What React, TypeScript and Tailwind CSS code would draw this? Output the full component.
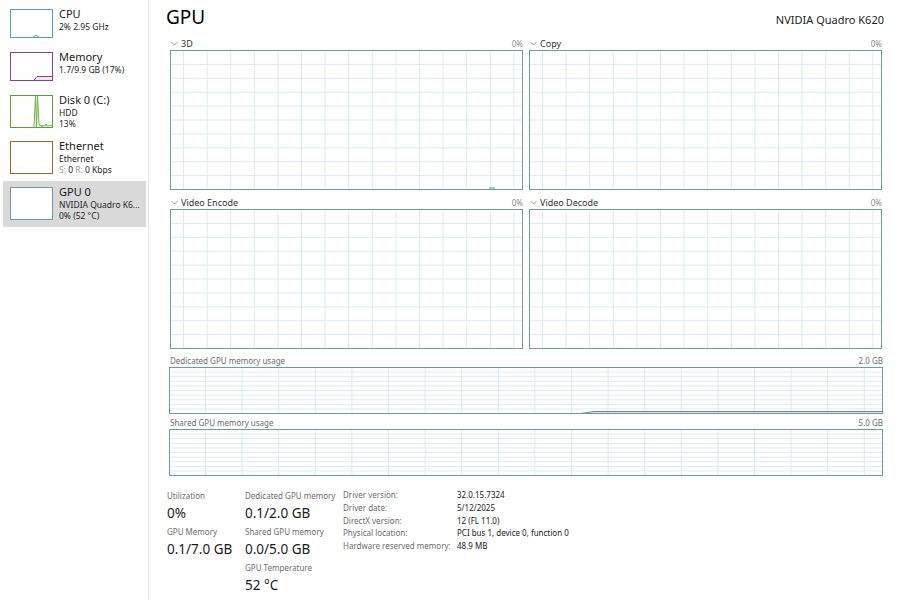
import React, { useId } from 'react';

const FONT = { fontFamily: '"Noto Sans", "Open Sans", Arial, sans-serif' };

const Chevron: React.FC = () => (
  <svg width="7" height="5" viewBox="0 0 7 5" className="mr-[3px]">
    <path d="M0.5 1 L3.5 4 L6.5 1" fill="none" stroke="#8a8a8a" strokeWidth="0.9" />
  </svg>
);

type GridProps = {
  cellW: number;
  cellH: number;
  offX: number;
  children?: React.ReactNode;
};

// scrolling usage chart: light grid behind, series drawn on top
const GridChart: React.FC<GridProps> = ({ cellW, cellH, offX, children }) => {
  const id = useId().replace(/:/g, '');
  return (
    <svg className="absolute inset-0 w-full h-full">
      <defs>
        <pattern id={`v${id}`} x={offX} y="0" width={cellW} height="10" patternUnits="userSpaceOnUse">
          <line x1="0.5" y1="0" x2="0.5" y2="10" stroke="#dde9ec" strokeWidth="1" />
        </pattern>
        <pattern id={`h${id}`} x="0" y="0" width="10" height={cellH} patternUnits="userSpaceOnUse">
          <line x1="0" y1={cellH - 0.5} x2="10" y2={cellH - 0.5} stroke="#dde9ec" strokeWidth="1" />
        </pattern>
      </defs>
      <rect width="100%" height="100%" fill={`url(#h${id})`} />
      <rect width="100%" height="100%" fill={`url(#v${id})`} />
      {children}
    </svg>
  );
};

const EngineGraph: React.FC<{ name: string; blip?: boolean }> = ({ name, blip }) => (
  <div className="flex flex-col">
    <div className="flex items-center justify-between h-[13px] text-[9px] leading-[13px]">
      <div className="flex items-center text-[#333] pl-[1px]">
        <Chevron />
        <span>{name}</span>
      </div>
      <span className="text-[#8a8a8a] text-[8px]">0%</span>
    </div>
    <div className="relative h-[140px] border border-[#6e9aa2] bg-white">
      <GridChart cellW={23.6} cellH={13.9} offX={12}>
        {blip && <line x1="318" y1="137" x2="324" y2="137" stroke="#5d8f99" strokeWidth="1" />}
      </GridChart>
    </div>
  </div>
);

const MemoryGraph: React.FC<{ name: string; max: string; line?: boolean }> = ({ name, max, line }) => (
  <div className="flex flex-col">
    <div className="flex items-center justify-between h-[13px] text-[8px] leading-[13px] text-[#6d6d6d]">
      <span className="pl-[1px]">{name}</span>
      <span>{max}</span>
    </div>
    <div className="relative h-[47px] border border-[#6e9aa2] bg-white">
      <GridChart cellW={36.6} cellH={4.6} offX={35}>
        {line && (
          <>
            <polygon points="411,46 424,43.5 714,43.5 714,46" fill="#d4e6ea" />
            <polyline points="411,45.5 424,43.5 714,43.5" fill="none" stroke="#5d8f99" strokeWidth="1" />
          </>
        )}
      </GridChart>
    </div>
  </div>
);

type SideItem = {
  title: string;
  lines: React.ReactNode[];
  border: string;
  h: string;
  thumbH: string;
  selected?: boolean;
  thumb?: React.ReactNode;
};

const sideItems: SideItem[] = [
  {
    title: 'CPU',
    lines: ['2%  2.95 GHz'],
    border: 'border-[#5a9dbf]',
    h: 'h-[43px]',
    thumbH: 'h-[29px]',
    thumb: (
      <svg className="absolute inset-0 w-full h-full">
        <polyline points="22,26.5 25,25.5 28,26.5" fill="none" stroke="#5a9dbf" strokeWidth="1" />
      </svg>
    ),
  },
  {
    title: 'Memory',
    lines: ['1.7/9.9 GB (17%)'],
    border: 'border-[#8b3d8b]',
    h: 'h-[43px]',
    thumbH: 'h-[29px]',
    thumb: (
      <svg className="absolute inset-0 w-full h-full">
        <polygon points="23,27 26,23.5 41,23.5 41,27" fill="#f1e4f1" />
        <polyline points="23,27 26,23.5 41,23.5" fill="none" stroke="#8b3d8b" strokeWidth="1" />
      </svg>
    ),
  },
  {
    title: 'Disk 0 (C:)',
    lines: ['HDD', '13%'],
    border: 'border-[#5f9e34]',
    h: 'h-[46px]',
    thumbH: 'h-[33px]',
    thumb: (
      <svg className="absolute inset-0 w-full h-full">
        <polyline
          points="23,31 24.5,0 25.5,31 26.5,0 28,28 29,30 30,29 31,31 32,29 33,30 34,30 35,28 36,30 38,30 41,29"
          fill="none"
          stroke="#6cb33f"
          strokeWidth="1"
        />
      </svg>
    ),
  },
  {
    title: 'Ethernet',
    lines: [
      'Ethernet',
      <span key="s">
        <span className="text-[#9a9a9a]">S:</span> 0 <span className="text-[#9a9a9a]">R:</span> 0 Kbps
      </span>,
    ],
    border: 'border-[#a2682f]',
    h: 'h-[46px]',
    thumbH: 'h-[33px]',
  },
  {
    title: 'GPU 0',
    lines: ['NVIDIA Quadro K6...', '0% (52 °C)'],
    border: 'border-[#6e9aa2]',
    h: 'h-[46px]',
    thumbH: 'h-[33px]',
    selected: true,
  },
];

const stats = [
  [
    { label: 'Utilization', value: '0%' },
    { label: 'GPU Memory', value: '0.1/7.0 GB' },
  ],
  [
    { label: 'Dedicated GPU memory', value: '0.1/2.0 GB' },
    { label: 'Shared GPU memory', value: '0.0/5.0 GB' },
    { label: 'GPU Temperature', value: '52 °C' },
  ],
];

const props = [
  ['Driver version:', '32.0.15.7324'],
  ['Driver date:', '5/12/2025'],
  ['DirectX version:', '12 (FL 11.0)'],
  ['Physical location:', 'PCI bus 1, device 0, function 0'],
  ['Hardware reserved memory:', '48.9 MB'],
];

const App: React.FC = () => {
  return (
    <div className="flex w-[902px] h-[600px] bg-white overflow-hidden text-[#1b1b1b]" style={FONT}>
      {/* left device list */}
      <aside className="w-[149px] shrink-0 border-r border-[#e8e8e8] pt-[3px] pl-[3px] pr-[2px]">
        {sideItems.map((it) => (
          <div
            key={it.title}
            className={`flex items-start pt-[6px] pl-[7px] ${it.h} ${it.selected ? 'bg-[#d9d9d9]' : ''}`}
          >
            <div className={`relative w-[43px] ${it.thumbH} border ${it.border} bg-white shrink-0`}>{it.thumb}</div>
            <div className="ml-[6px] flex flex-col -mt-[2px]">
              <span className="text-[11px] leading-[14px]">{it.title}</span>
              {it.lines.map((l, i) => (
                <span key={i} className="text-[8.5px] leading-[11px] text-[#262626] whitespace-nowrap">
                  {l}
                </span>
              ))}
            </div>
          </div>
        ))}
      </aside>

      <main className="flex-1 flex flex-col pl-[17px] pr-[18px]">
        <div className="flex items-baseline justify-between h-[37px] pt-[4px]">
          <h1 className="text-[19px] leading-[26px] text-black">GPU</h1>
          <span className="text-[11px] text-[#222]">NVIDIA Quadro K620</span>
        </div>

        <div className="grid grid-cols-2 gap-x-[6px] gap-y-[6px] pl-[4px] pr-[2px]">
          <EngineGraph name="3D" blip />
          <EngineGraph name="Copy" />
          <EngineGraph name="Video Encode" />
          <EngineGraph name="Video Decode" />
        </div>

        <div className="flex flex-col gap-[2px] mt-[5px] pl-[3px] pr-[1px]">
          <MemoryGraph name="Dedicated GPU memory usage" max="2.0 GB" line />
          <MemoryGraph name="Shared GPU memory usage" max="5.0 GB" />
        </div>

        <div className="flex mt-[13px] pl-[1px]">
          {stats.map((col, ci) => (
            <div key={ci} className={ci === 0 ? 'w-[78px]' : 'w-[98px]'}>
              {col.map((s) => (
                <div key={s.label} className="flex flex-col">
                  <span className="text-[8px] leading-[13px] text-[#6d6d6d] whitespace-nowrap">{s.label}</span>
                  <span className="text-[13.5px] leading-[23px] text-[#1b1b1b] whitespace-nowrap">{s.value}</span>
                </div>
              ))}
            </div>
          ))}
          <div className="flex flex-col">
            {props.map(([k, v]) => (
              <div key={k} className="flex text-[8px] leading-[12.75px] whitespace-nowrap">
                <span className="w-[114px] text-[#6d6d6d]">{k}</span>
                <span className="text-[#1b1b1b]">{v}</span>
              </div>
            ))}
          </div>
        </div>
      </main>
    </div>
  );
};

export default App;
